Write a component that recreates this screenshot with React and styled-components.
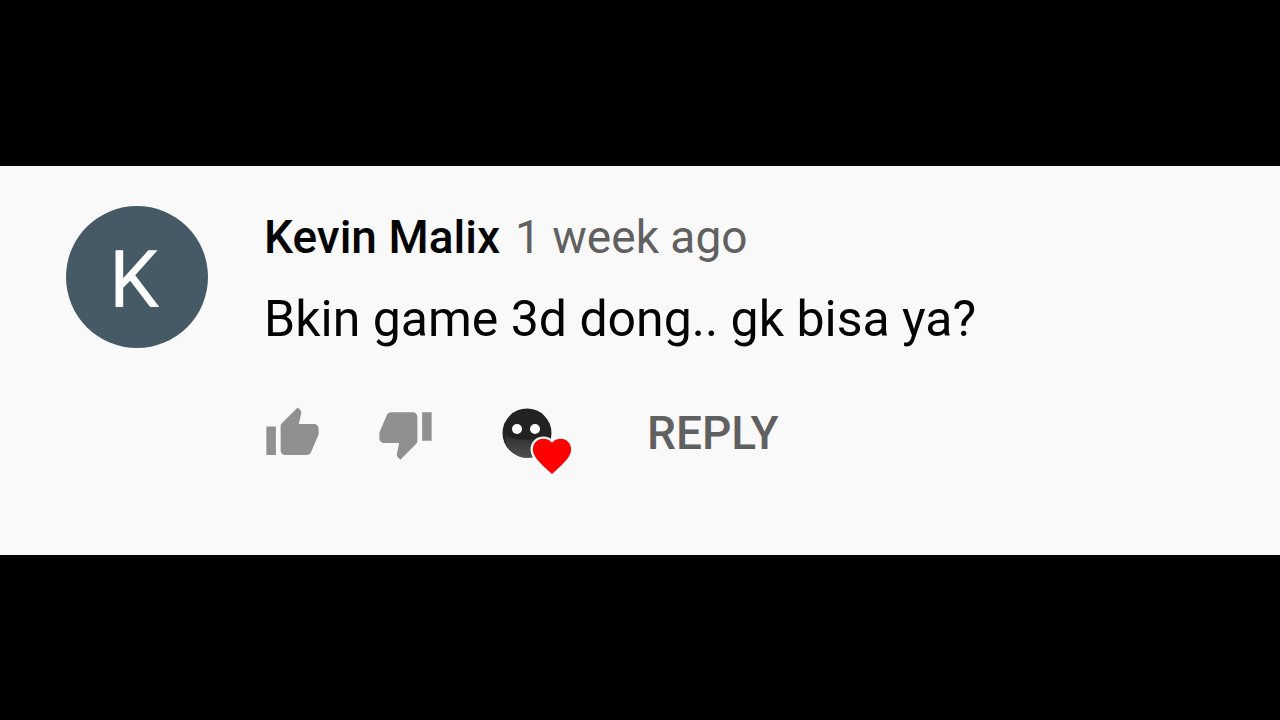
import React from 'react';
import styled, { createGlobalStyle } from 'styled-components';

const GlobalStyle = createGlobalStyle`
    * {
        box-sizing: border-box;
    }
    body {
        margin: 0;
        background-color: #000000;
        font-family: Roboto, 'Liberation Sans', sans-serif;
    }
`

const Page = styled.main`
    padding: 166px 0;
`

const StyledComment = styled.article`
    display: flex;
    align-items: flex-start;
    gap: 56px;
    padding: 40px 66px 93px;
    background-color: #f9f9f9;
`

const Avatar = styled.div`
    display: flex;
    flex-shrink: 0;
    align-items: center;
    justify-content: center;
    width: 142px;
    height: 142px;
    padding: 6px 6px 0 0;
    border-radius: 50%;
    background-color: #455a64;
    color: #ffffff;
    font-size: 80px;
    line-height: 80px;
`

const Content = styled.div`
    flex: 1;
    min-width: 0;
`

const Header = styled.header`
    display: flex;
    flex-wrap: wrap;
    align-items: baseline;
    gap: 15px;
    font-size: 46px;
    line-height: 62px;
`

const Author = styled.a`
    color: #030303;
    font-weight: 500;
    text-decoration: none;
`

const Published = styled.a`
    color: #606060;
    text-decoration: none;
`

const Message = styled.p`
    margin: 15px 0 0;
    color: #030303;
    font-size: 50px;
    line-height: 72px;
`

const Actions = styled.div`
    display: flex;
    align-items: center;
    margin-top: 49px;
`

const IconButton = styled.button`
    display: block;
    margin-right: ${props => props.$gap};
    padding: 0;
    border: 0;
    background: none;
    color: #909090;
    cursor: pointer;
    svg {
        display: block;
        width: 57px;
        height: 57px;
        fill: currentColor;
    }
`

const CreatorHeart = styled.button`
    position: relative;
    width: 50px;
    height: 50px;
    margin-right: 95px;
    padding: 0;
    border: 0;
    background: none;
    cursor: pointer;
    .face {
        display: block;
        width: 50px;
        height: 50px;
    }
    .heart {
        position: absolute;
        top: 25px;
        left: 27px;
        width: 46px;
        height: 46px;
        overflow: visible;
    }
`

const ReplyButton = styled.button`
    padding: 0;
    border: 0;
    background: none;
    color: #606060;
    font-family: inherit;
    font-size: 46px;
    font-weight: 500;
    line-height: 58px;
    text-transform: uppercase;
    cursor: pointer;
`

function ThumbUp() {
    return (
        <svg viewBox='0 0 24 24' aria-hidden='true'>
            <path d='M1 21h4V9H1v12zm22-11c0-1.1-.9-2-2-2h-6.31l.95-4.57.03-.32c0-.41-.17-.79-.44-1.06L14.17 1 7.59 7.59C7.22 7.95 7 8.45 7 9v10c0 1.1.9 2 2 2h9c.83 0 1.54-.5 1.84-1.22l3.02-7.05c.09-.23.14-.47.14-.73v-2z' />
        </svg>
    )
}

function ThumbDown() {
    return (
        <svg viewBox='0 0 24 24' aria-hidden='true'>
            <path d='M15 3H6c-.83 0-1.54.5-1.84 1.22l-3.02 7.05c-.09.23-.14.47-.14.73v2c0 1.1.9 2 2 2h6.31l-.95 4.57-.03.32c0 .41.17.79.44 1.06L9.83 23l6.59-6.59c.36-.36.58-.86.58-1.41V5c0-1.1-.9-2-2-2zm4 0v12h4V3h-4z' />
        </svg>
    )
}

function Face() {
    return (
        <svg className='face' viewBox='0 0 50 50' aria-hidden='true'>
            <defs>
                <linearGradient id='chin' x1='0' y1='0' x2='0' y2='1'>
                    <stop offset='0' stopColor='#303030' />
                    <stop offset='1' stopColor='#505050' />
                </linearGradient>
            </defs>
            <circle cx='25' cy='25' r='24.5' fill='#222222' />
            <path d='M3 28c13 5 31 5 44 0a22 22 0 0 1-44 0z' fill='url(#chin)' />
            <circle cx='15' cy='21' r='5' fill='#ffffff' />
            <circle cx='33' cy='21' r='5' fill='#ffffff' />
        </svg>
    )
}

function Heart() {
    return (
        <svg className='heart' viewBox='0 0 24 24' aria-hidden='true'>
            <path
                d='M12 21.35l-1.45-1.32C5.4 15.36 2 12.28 2 8.5 2 5.42 4.42 3 7.5 3c1.74 0 3.41.81 4.5 2.09C13.09 3.81 14.76 3 16.5 3 19.58 3 22 5.42 22 8.5c0 3.78-3.4 6.86-8.55 11.54L12 21.35z'
                fill='#ff0000'
                stroke='#ffffff'
                strokeWidth='2.4'
                paintOrder='stroke'
            />
        </svg>
    )
}

export default function App() {
    return (
        <Page>
            <GlobalStyle />
            <StyledComment>
                <Avatar>K</Avatar>
                <Content>
                    <Header>
                        <Author href='#author'>Kevin Malix</Author>
                        <Published href='#comment'>1 week ago</Published>
                    </Header>
                    <Message>Bkin game 3d dong.. gk bisa ya?</Message>
                    <Actions>
                        <IconButton type='button' aria-label='Like' $gap='56px'>
                            <ThumbUp />
                        </IconButton>
                        <IconButton type='button' aria-label='Dislike' $gap='68px'>
                            <ThumbDown />
                        </IconButton>
                        <CreatorHeart type='button' aria-label='Loved by the creator'>
                            <Face />
                            <Heart />
                        </CreatorHeart>
                        <ReplyButton type='button'>Reply</ReplyButton>
                    </Actions>
                </Content>
            </StyledComment>
        </Page>
    )
}
